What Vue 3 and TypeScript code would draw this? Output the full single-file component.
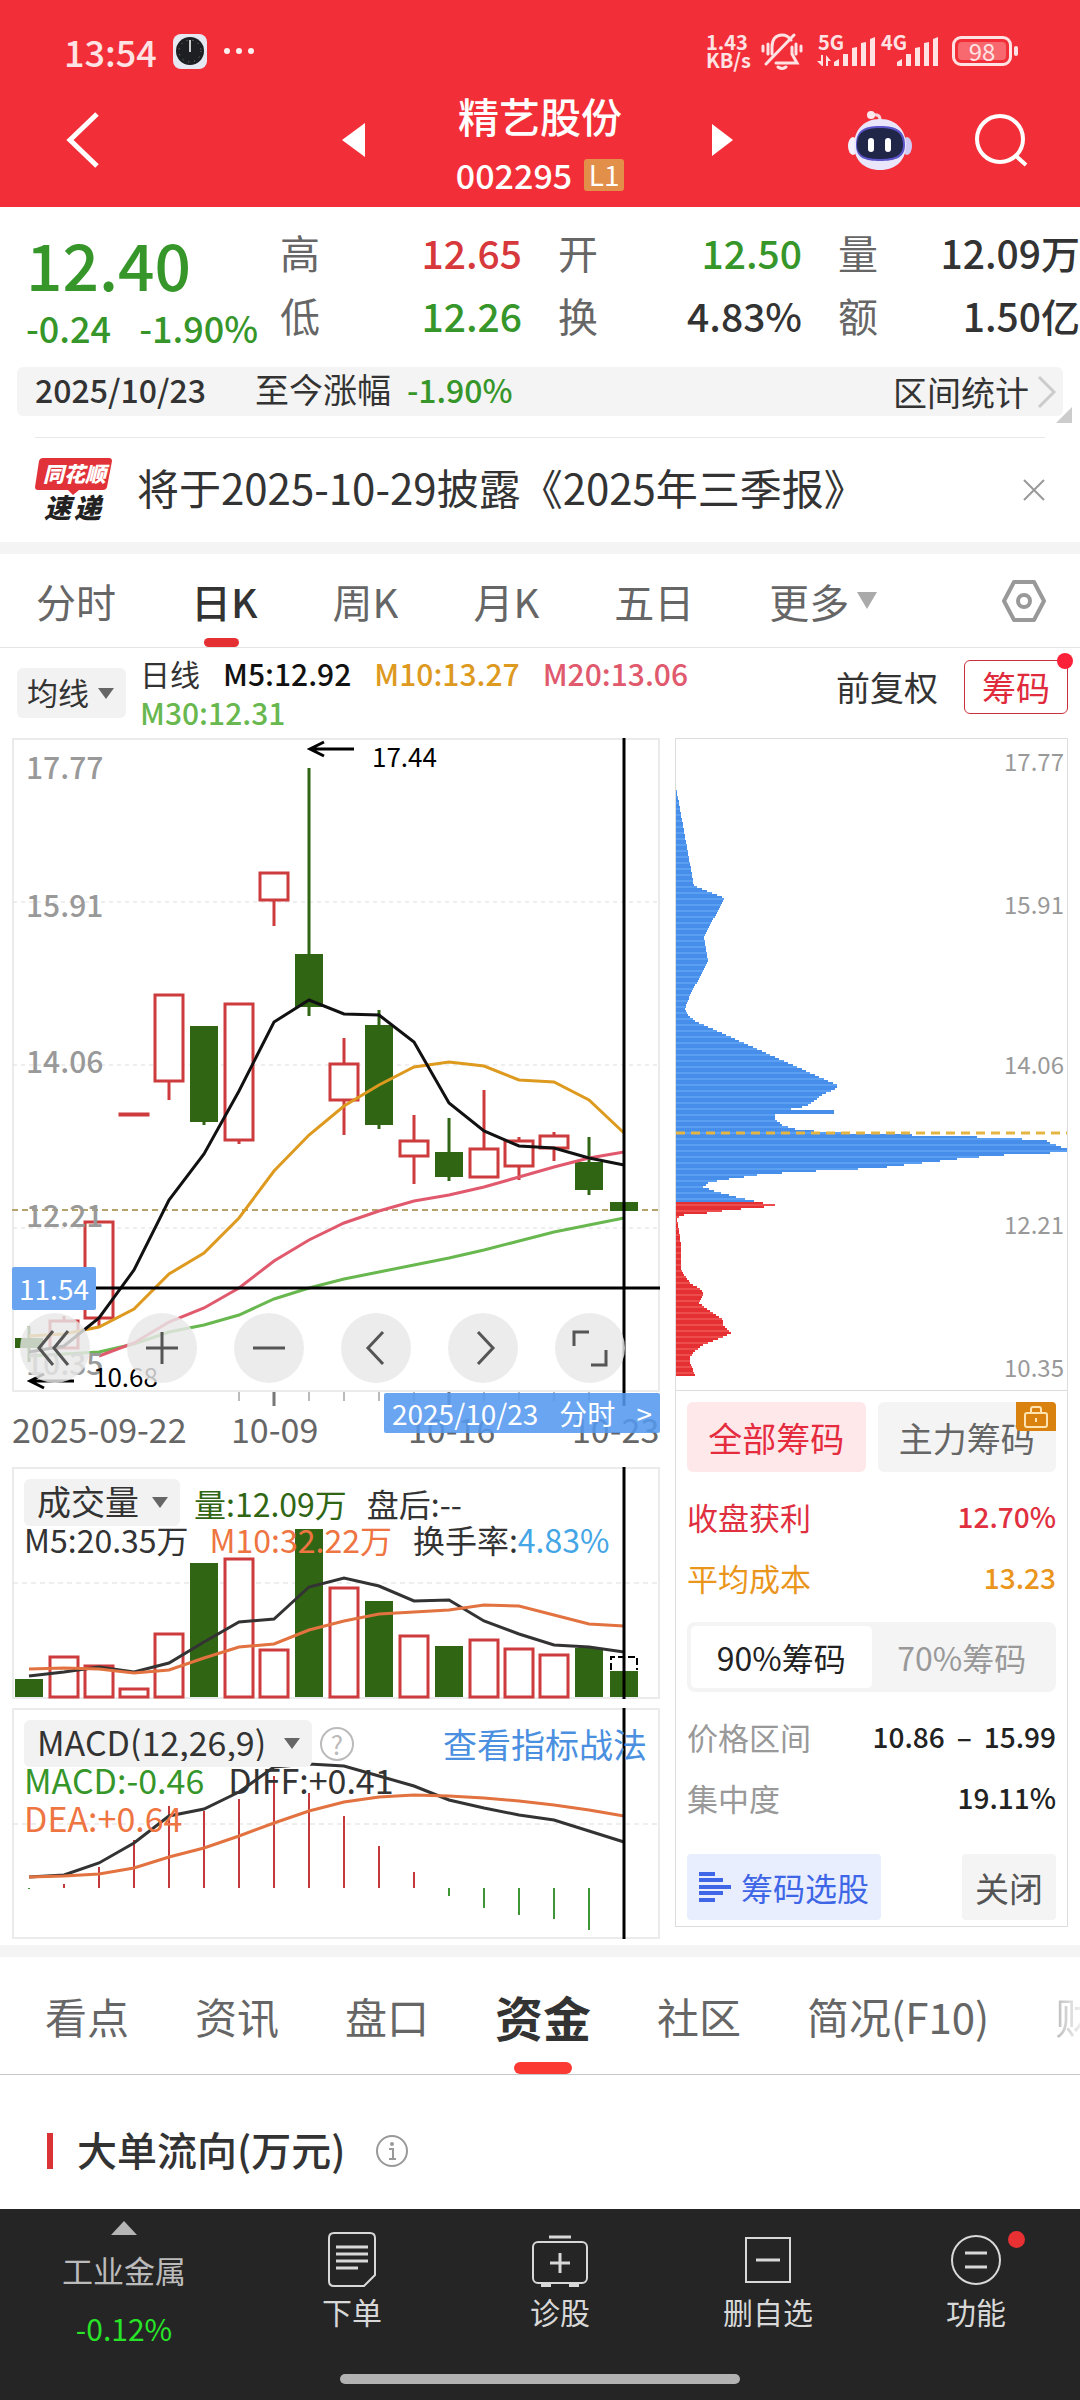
<script setup lang="ts">
import { ref } from 'vue'

type Tone = 'up' | 'down'

interface Candle {
  tone: Tone
  high: number
  top: number
  bottom: number
  low: number
}

interface Figure {
  label: string
  value: string
  tone: string
}

const STEP = 35
const FIRST = 17
const cx = (i: number): number => FIRST + i * STEP

const line = (values: number[], from = 0): string =>
  values.map((y, i) => `${cx(i + from)},${y}`).join(' ')

const figures: Figure[] = [
  { label: '高', value: '12.65', tone: 'up' },
  { label: '开', value: '12.50', tone: 'down' },
  { label: '量', value: '12.09万', tone: 'plain' },
  { label: '低', value: '12.26', tone: 'down' },
  { label: '换', value: '4.83%', tone: 'plain' },
  { label: '额', value: '1.50亿', tone: 'plain' },
]

const periods = ['分时', '日K', '周K', '月K', '五日']
const period = ref('日K')

const averages = [
  { text: 'M5:12.92', tone: 'ma5' },
  { text: 'M10:13.27', tone: 'ma10' },
  { text: 'M20:13.06', tone: 'ma20' },
  { text: 'M30:12.31', tone: 'ma30' },
]

const candles: Candle[] = [
  { tone: 'down', high: 588, top: 600, bottom: 610, low: 624 },
  { tone: 'up', high: 578, top: 583, bottom: 610, low: 610 },
  { tone: 'up', high: 484, top: 484, bottom: 580, low: 589 },
  { tone: 'up', high: 376, top: 376, bottom: 376, low: 376 },
  { tone: 'up', high: 257, top: 257, bottom: 343, low: 362 },
  { tone: 'down', high: 288, top: 288, bottom: 384, low: 387 },
  { tone: 'up', high: 266, top: 266, bottom: 402, low: 406 },
  { tone: 'up', high: 135, top: 135, bottom: 162, low: 188 },
  { tone: 'down', high: 30, top: 216, bottom: 269, low: 278 },
  { tone: 'up', high: 300, top: 326, bottom: 362, low: 397 },
  { tone: 'down', high: 272, top: 287, bottom: 387, low: 391 },
  { tone: 'up', high: 377, top: 403, bottom: 418, low: 446 },
  { tone: 'down', high: 380, top: 414, bottom: 439, low: 443 },
  { tone: 'up', high: 352, top: 411, bottom: 439, low: 439 },
  { tone: 'up', high: 399, top: 403, bottom: 428, low: 442 },
  { tone: 'up', high: 394, top: 398, bottom: 410, low: 423 },
  { tone: 'down', high: 399, top: 424, bottom: 452, low: 457 },
  { tone: 'down', high: 464, top: 464, bottom: 473, low: 473 },
]

const ma5 = [614, 608, 580, 532, 462, 416, 353, 284, 262, 276, 277, 304, 365, 393, 408, 410, 420, 427]
const ma10 = [598, 596, 589, 571, 536, 515, 480, 433, 397, 368, 347, 329, 324, 328, 342, 344, 362, 395]
const ma20 = [618, 605, 584, 570, 550, 523, 502, 485, 473, 463, 457, 449, 439, 429, 420, 414]
const ma30 = [618, 616, 614, 606, 594, 587, 577, 561, 550, 541, 534, 527, 520, 512, 503, 494, 487, 480]

const scale = [
  { text: '17.77', y: 41, side: 32 },
  { text: '15.91', y: 179, side: 175 },
  { text: '14.06', y: 335, side: 335 },
  { text: '12.21', y: 489, side: 495 },
  { text: '10.35', y: 637, side: 638 },
]

const ticks = [6, 7, 8, 9, 10, 11, 12, 13, 14, 15, 16, 17]

const volumeTops = [212, 190, 199, 222, 167, 96, 92, 183, 62, 121, 134, 169, 179, 173, 182, 188, 181, 204]
const volumeM5 = [209, 205, 200, 205, 196, 175, 155, 152, 120, 111, 119, 134, 133, 154, 167, 178, 180, 185]
const volumeM10 = [202, 201, 202, 206, 203, 191, 180, 177, 163, 154, 147, 145, 143, 138, 139, 148, 157, 159]

const macdEnds = [181, 176, 159, 132, 98, 103, 91, 68, 85, 108, 138, 164, 188, 200, 207, 211, 222, 230]
const diff = [169, 167, 155, 135, 108, 101, 84, 59, 56, 58, 68, 78, 92, 100, 107, 112, 123, 134]
const dea = [169, 168, 166, 160, 149, 140, 128, 115, 103, 94, 89, 87, 88, 90, 93, 97, 102, 108]

/* Outline of the chip distribution: [bar length, y] */
const outline: [number, number][] = [
  [0, 47], [18, 146], [49, 158], [28, 196], [32, 222], [14, 255], [9, 269], [11, 274], [19, 281],
  [161, 345], [161, 348], [146, 355], [131, 366], [115, 369], [158, 370], [158, 373], [99, 374], [99, 379], [106, 385], [122, 390],
  [171, 393], [301, 397], [369, 400], [374, 403], [391, 409], [391, 411], [374, 413], [328, 415], [290, 418], [246, 423],
  [202, 428], [161, 430], [119, 432], [81, 435], [61, 438], [45, 440], [32, 443], [27, 447], [41, 452],
  [64, 458], [87, 463], [99, 464], [99, 466], [53, 470], [31, 473], [8, 475], [1, 478], [5, 505], [5, 530],
  [14, 543], [26, 550], [27, 556], [23, 563], [32, 570], [47, 580], [47, 585], [55, 593], [47, 597],
  [27, 605], [19, 611], [14, 617], [14, 622], [19, 636],
]

const lengthAt = (y: number): number => {
  const next = outline.findIndex((p) => p[1] >= y)
  if (next <= 0) return outline[0][0]
  const [x1, y1] = outline[next - 1]
  const [x2, y2] = outline[next]
  return Math.round(x1 + ((x2 - x1) * (y - y1)) / (y2 - y1))
}

const chipRows = Array.from({ length: 295 }, (_, i) => {
  const y = 47 + i * 2
  return { y, width: lengthAt(y), tone: y < 463 ? 'loss' : 'gain', light: i % 3 === 2 }
})

const chipRange = ref('90%筹码')
const chipRanges = ['90%筹码', '70%筹码']

const sections = ['看点', '资讯', '盘口', '资金', '社区', '简况(F10)', '财务']
const section = ref('资金')
</script>

<template>
  <div class="page">
    <header class="top">
      <div class="status">
        <div class="status-side">
          <span class="clock-text">13:54</span>
          <svg class="clock-icon" width="34" height="35" viewBox="0 0 34 35" aria-hidden="true">
            <rect width="34" height="35" rx="8" fill="#e6e9f2" />
            <circle cx="17" cy="17" r="14" fill="#1d1f22" />
            <circle cx="17" cy="17" r="11" fill="none" stroke="#888" stroke-width="1" stroke-dasharray="1 5" />
            <path d="M17 18V6" stroke="#ccc" stroke-width="2" />
          </svg>
          <svg width="32" height="8" viewBox="0 0 32 8" fill="#fff0f0" aria-hidden="true">
            <circle cx="4" cy="4" r="3" /><circle cx="16" cy="4" r="3" /><circle cx="28" cy="4" r="3" />
          </svg>
        </div>
        <div class="status-side">
          <span class="speed">1.43<br />KB/s</span>
          <svg class="bell" width="42" height="38" viewBox="0 0 42 38" fill="none" stroke="#ffe2e3" stroke-width="3" stroke-linecap="round" aria-hidden="true">
            <path d="M11 22V15C11 7 15 3 21 3C25 3 28 5 30 8M31 15V22L36 31H15" />
            <path d="M33 3L5 32" />
            <path d="M17 35Q21 38 25 35" />
            <path d="M2 14V19M7 12V22M35 12V22M40 14V19" />
          </svg>
          <span class="signal">
            <small>5G</small>
            <svg width="59" height="32" viewBox="0 0 59 32" fill="#ffe2e3" aria-hidden="true">
              <path d="M4 20H6V31H5L0 26H4ZM9 31H11V26H14L9 20Z" />
              <path d="M17 31V27L22 24V31ZM26 31V19H31V31ZM35 31V13L40 12V31ZM44 31V8L49 7V31ZM53 31V4L58 2V31Z" />
            </svg>
          </span>
          <span class="signal">
            <small>4G</small>
            <svg width="59" height="32" viewBox="0 0 59 32" fill="#ffe2e3" aria-hidden="true">
              <path d="M17 31V27L22 24V31ZM26 31V19H31V31ZM35 31V13L40 12V31ZM44 31V8L49 7V31ZM53 31V4L58 2V31Z" />
            </svg>
          </span>
          <span class="battery"><span>98</span></span>
        </div>
      </div>
      <div class="nav">
        <button class="icon-btn back" aria-label="返回">
          <svg width="36" height="60" viewBox="0 0 36 60" fill="none" stroke="#fff" stroke-width="5"><path d="M33 4L6 30L33 56" /></svg>
        </button>
        <button class="icon-btn" aria-label="上一只">
          <svg width="23" height="34" viewBox="0 0 23 34" fill="#fff"><path d="M23 0V34L0 17Z" /></svg>
        </button>
        <div class="title">
          <h1>精艺股份</h1>
          <p>002295<span class="level">L1</span></p>
        </div>
        <button class="icon-btn next" aria-label="下一只">
          <svg width="21" height="32" viewBox="0 0 21 32" fill="#fff"><path d="M0 0V32L21 16Z" /></svg>
        </button>
        <button class="icon-btn robot" aria-label="智能助手">
          <svg width="64" height="62" viewBox="0 0 64 62">
            <path d="M24 6Q33 4 32 13" fill="none" stroke="#f6d5df" stroke-width="3" />
            <circle cx="23" cy="6" r="4" fill="#fbe9ef" />
            <ellipse cx="5" cy="37" rx="5" ry="9" fill="#f3f0fb" />
            <ellipse cx="59" cy="37" rx="5" ry="9" fill="#cfc9f3" />
            <path d="M32 10C50 10 58 23 58 36C58 51 48 61 32 61C16 61 6 51 6 36C6 23 14 10 32 10Z" fill="#e9e6fb" />
            <path d="M32 17C49 17 57 22 57 36C57 49 47 52 32 52C17 52 8 49 8 36C8 22 15 17 32 17Z" fill="#5b55c9" />
            <path d="M32 19C48 19 55 24 55 36C55 47 46 50 32 50C18 50 9 47 9 36C9 24 16 19 32 19Z" fill="#1f2647" />
            <rect x="20" y="29" width="6" height="14" rx="3" fill="#fff" />
            <rect x="37" y="29" width="6" height="14" rx="3" fill="#fff" />
          </svg>
        </button>
        <button class="icon-btn search" aria-label="搜索">
          <svg width="54" height="54" viewBox="0 0 54 54" fill="none" stroke="#fff" stroke-width="4">
            <circle cx="26" cy="26" r="23" /><path d="M42 43L52 52" />
          </svg>
        </button>
      </div>
    </header>

    <section class="quote">
      <div class="price">
        <strong>12.40</strong>
        <p><span>-0.24</span><span>-1.90%</span></p>
      </div>
      <dl class="figures">
        <div v-for="f in figures" :key="f.label">
          <dt>{{ f.label }}</dt>
          <dd :class="f.tone">{{ f.value }}</dd>
        </div>
      </dl>
    </section>

    <div class="strip">
      <span class="strip-date">2025/10/23</span>
      <span class="strip-label">至今涨幅</span>
      <span class="strip-pct">-1.90%</span>
      <a href="#range" class="strip-link">
        区间统计
        <svg width="20" height="34" viewBox="0 0 20 34" fill="none" stroke="#ccc" stroke-width="3"><path d="M2 2L17 17L2 32" /></svg>
      </a>
      <i class="corner"></i>
    </div>

    <section class="news">
      <svg class="logo" width="78" height="66" viewBox="0 0 78 66">
        <path d="M8 1H74Q77 1 77 4L72 30Q71 33 68 33H44L38 38L33 33H3Q0 33 0 30L4 4Q5 1 8 1Z" fill="#e03238" />
        <text x="8" y="25" class="logo-a">同花顺</text>
        <text x="9" y="61" class="logo-b">速</text>
        <text x="39" y="61" class="logo-b">递</text>
      </svg>
      <a href="#report">将于2025-10-29披露《2025年三季报》</a>
      <button class="icon-btn" aria-label="关闭提示">
        <svg width="22" height="22" viewBox="0 0 22 22" stroke="#999" stroke-width="2"><path d="M1 1L21 21M21 1L1 21" /></svg>
      </button>
    </section>

    <nav class="periods">
      <button v-for="p in periods" :key="p" :class="{ active: p === period }" @click="period = p">{{ p }}</button>
      <button class="more">更多<i class="tri"></i></button>
      <button class="icon-btn setting" aria-label="设置">
        <svg width="44" height="44" viewBox="0 0 44 44" fill="none" stroke="#999" stroke-width="4" stroke-linejoin="round">
          <path d="M12 3H32L42 22L32 41H12L2 22Z" /><circle cx="22" cy="22" r="6" />
        </svg>
      </button>
    </nav>

    <section class="averages">
      <label class="picker picker-ma">
        <select aria-label="主图指标"><option>均线</option></select><i class="tri"></i>
      </label>
      <p class="ma-list">
        <span>日线</span>
        <span v-for="m in averages" :key="m.text" :class="m.tone">{{ m.text }}</span>
      </p>
      <div class="ma-actions">
        <button class="plain-btn">前复权</button>
        <button class="chip-btn">筹码<i class="dot"></i></button>
      </div>
    </section>

    <section class="charts">
      <div class="left">
        <div class="panel">
          <svg viewBox="0 0 648 729">
            <rect x="1" y="1" width="646" height="652" fill="none" stroke="#ebebeb" stroke-width="2" />
            <g stroke="#ddd" stroke-width="1" stroke-dasharray="4 4">
              <path d="M1 164H647M1 327H647M1 490H647" />
            </g>
            <path d="M0 472H648" stroke="#b5a26c" stroke-width="2" stroke-dasharray="6 4" />
            <g v-for="(c, i) in candles" :key="i" :class="['candle', c.tone]">
              <path :d="`M${cx(i)} ${c.high}V${c.top}M${cx(i)} ${c.bottom}V${c.low}`" />
              <rect :x="cx(i) - 14" :y="c.top" width="28" :height="Math.max(c.bottom - c.top, 1)" />
            </g>
            <g class="curves">
              <polyline :points="line(ma30)" stroke="#69b84f" />
              <polyline :points="line(ma20, 2)" stroke="#e0596d" />
              <polyline :points="line(ma10)" stroke="#dd9a1f" />
              <polyline :points="line(ma5)" stroke="#111" />
            </g>
            <g class="axis">
              <text v-for="s in scale" :key="s.text" x="14" :y="s.y">{{ s.text }}</text>
            </g>
            <g fill="none" stroke="#000" stroke-width="3">
              <path d="M342 11H298M312 4L298 11L312 18" />
              <path d="M62 643H18M32 636L18 643L32 650" />
            </g>
            <text class="mark" x="360" y="29">17.44</text>
            <text class="mark" x="81" y="649">10.68</text>
            <g stroke="#bbb" stroke-width="2">
              <path v-for="t in ticks" :key="t" :d="`M${cx(t)} 654V663`" />
            </g>
            <path d="M262 654V668M437 654V668" stroke="#777" stroke-width="3" />
            <g class="dates">
              <text x="0" y="705">2025-09-22</text>
              <text x="219" y="705">10-09</text>
              <text x="396" y="705">10-16</text>
              <text x="560" y="705">10-23</text>
            </g>
            <path d="M0 550H648M612 0V668" stroke="#000" stroke-width="3" />
          </svg>
          <span class="price-tag">11.54</span>
          <div class="tools">
            <button aria-label="最左"><svg viewBox="0 0 40 40"><path d="M18 3L4 20L18 37M33 3L19 20L33 37" /></svg></button>
            <button aria-label="放大"><svg viewBox="0 0 40 40"><path d="M20 4V36M4 20H36" /></svg></button>
            <button aria-label="缩小"><svg viewBox="0 0 40 40"><path d="M4 20H36" /></svg></button>
            <button aria-label="左移"><svg viewBox="0 0 40 40"><path d="M27 4L12 20L27 36" /></svg></button>
            <button aria-label="右移"><svg viewBox="0 0 40 40"><path d="M15 4L30 20L15 36" /></svg></button>
            <button aria-label="全屏"><svg viewBox="0 0 40 40"><path d="M4 18V4H19M36 22V37H21" /></svg></button>
          </div>
          <button class="date-tag"><span>2025/10/23</span><span>分时</span><span>&gt;</span></button>
        </div>

        <div class="panel">
          <svg viewBox="0 0 648 232">
            <rect x="1" y="1" width="646" height="230" fill="none" stroke="#ebebeb" stroke-width="2" />
            <path d="M1 116H647" stroke="#ddd" stroke-dasharray="5 4" />
            <g v-for="(top, i) in volumeTops" :key="i" :class="['candle', candles[i].tone]">
              <rect :x="cx(i) - 14" :y="top" width="28" :height="230 - top" />
            </g>
            <path d="M599 203V190H625V203" fill="none" stroke="#000" stroke-width="2" stroke-dasharray="7 3" />
            <g class="curves">
              <polyline :points="line(volumeM5)" stroke="#333" />
              <polyline :points="line(volumeM10)" stroke="#e2723f" />
            </g>
            <path d="M612 0V232" stroke="#000" stroke-width="3" />
          </svg>
          <div class="legend legend-vol">
            <p>
              <label class="picker picker-vol">
                <select aria-label="副图指标"><option>成交量</option></select><i class="tri"></i>
              </label>
              <span class="vol">量:12.09万</span><span>盘后:--</span>
            </p>
            <p class="spread"><span>M5:20.35万</span><span class="orange">M10:32.22万</span><span>换手率:<b>4.83%</b></span></p>
          </div>
        </div>

        <div class="panel macd">
          <svg viewBox="0 0 648 231">
            <rect x="1" y="1" width="646" height="229" fill="none" stroke="#ebebeb" stroke-width="2" />
            <path d="M1 116H647" stroke="#ddd" stroke-dasharray="5 4" />
            <path
              v-for="(end, i) in macdEnds"
              :key="i"
              :d="`M${cx(i)} 180V${end}`"
              :stroke="end < 180 ? '#c4393c' : '#3f9636'"
              stroke-width="2"
            />
            <g class="curves">
              <polyline :points="line(diff)" stroke="#333" />
              <polyline :points="line(dea)" stroke="#e2723f" />
            </g>
            <path d="M612 0V231" stroke="#000" stroke-width="3" />
          </svg>
          <div class="legend legend-macd">
            <p>
              <label class="picker picker-macd">
                <select aria-label="技术指标"><option>MACD(12,26,9)</option></select><i class="tri"></i>
              </label>
              <button class="help" aria-label="帮助">?</button>
              <a href="#strategy">查看指标战法</a>
            </p>
            <p class="spread"><span class="green">MACD:-0.46</span><span>DIFF:+0.41</span></p>
            <p><span class="orange">DEA:+0.64</span></p>
          </div>
        </div>
      </div>

      <div class="right">
        <svg viewBox="0 0 391 651" class="chips">
          <g shape-rendering="crispEdges">
            <rect
              v-for="r in chipRows"
              :key="r.y"
              x="0"
              :y="r.y"
              :width="r.width"
              height="2"
              :class="[r.tone, { light: r.light }]"
            />
          </g>
          <path d="M0 394H391" stroke="#e5b544" stroke-width="3" stroke-dasharray="9 6" />
          <g class="side-axis">
            <text v-for="s in scale" :key="s.text" x="388" :y="s.side">{{ s.text }}</text>
          </g>
        </svg>
        <div class="chip-info">
          <div class="chip-tabs">
            <button class="active">全部筹码</button>
            <button>
              主力筹码
              <span class="lock">
                <svg width="24" height="22" viewBox="0 0 24 22" fill="none" stroke="#ffe3b0" stroke-width="2">
                  <rect x="1" y="7" width="22" height="14" rx="2" /><path d="M7 7V3Q7 1 9 1H15Q17 1 17 3V7M12 12V16" />
                </svg>
              </span>
            </button>
          </div>
          <dl>
            <div class="red"><dt>收盘获利</dt><dd>12.70%</dd></div>
            <div class="amber"><dt>平均成本</dt><dd>13.23</dd></div>
          </dl>
          <div class="toggle">
            <button v-for="r in chipRanges" :key="r" :class="{ active: r === chipRange }" @click="chipRange = r">{{ r }}</button>
          </div>
          <dl class="muted">
            <div><dt>价格区间</dt><dd class="range"><span>10.86</span><span>–</span><span>15.99</span></dd></div>
            <div><dt>集中度</dt><dd>19.11%</dd></div>
          </dl>
          <div class="chip-actions">
            <button class="pick">
              <svg width="32" height="32" viewBox="0 0 32 32" fill="#3f66e6">
                <path d="M0 1H16V5H0ZM0 7H24V11H0ZM0 14H32V18H0ZM0 20H24V24H0ZM0 27H16V31H0Z" />
              </svg>
              筹码选股
            </button>
            <button class="close">关闭</button>
          </div>
        </div>
      </div>
    </section>

    <nav class="sections">
      <button v-for="s in sections" :key="s" :class="{ active: s === section }" @click="section = s">{{ s }}</button>
    </nav>

    <section class="flow">
      <h2>大单流向(万元)</h2>
      <button class="icon-btn" aria-label="说明">
        <svg width="34" height="34" viewBox="0 0 34 34" fill="none" stroke="#999" stroke-width="2">
          <circle cx="17" cy="17" r="15" />
          <circle cx="17" cy="10" r="2" fill="#999" stroke="none" />
          <path d="M14 15H18V25M14 25H21" />
        </svg>
      </button>
    </section>

    <footer class="bottom">
      <div class="bottom-row">
        <button class="industry">
          <i></i><span>工业金属</span><em>-0.12%</em>
        </button>
        <button>
          <svg width="48" height="56" viewBox="0 0 48 56">
            <path d="M6 1H42Q47 1 47 6V43L36 54H6Q1 54 1 49V6Q1 1 6 1Z" />
            <path d="M8 15H40M8 22H40M8 29H40M8 36H30" stroke-width="3" />
          </svg>
          下单
        </button>
        <button>
          <svg width="56" height="56" viewBox="0 0 56 56">
            <rect x="1" y="10" width="54" height="41" rx="5" />
            <path d="M17 5H39M28 21V41M18 31H38" stroke-width="3" /><path d="M9 53H19M37 53H47" stroke-width="4" />
          </svg>
          诊股
        </button>
        <button>
          <svg width="46" height="56" viewBox="0 0 46 56"><rect x="1" y="6" width="44" height="44" /><path d="M11 28H35" stroke-width="3" /></svg>
          删自选
        </button>
        <button>
          <svg width="52" height="56" viewBox="0 0 52 56"><circle cx="26" cy="28" r="24" /><path d="M15 21H37M15 35H37" stroke-width="3" /></svg>
          功能
          <b></b>
        </button>
      </div>
      <div class="home"></div>
    </footer>
  </div>
</template>

<style>
body {
  margin: 0;
  background: #fff;
}
</style>

<style scoped>
.page {
  display: flex;
  flex-direction: column;
  min-height: 100vh;
  overflow-x: hidden;
  background: #fff;
  color: #333;
  font-family: "Noto Sans CJK SC", sans-serif;
}
.page * {
  box-sizing: border-box;
}
h1,
h2,
p,
dl,
dd {
  margin: 0;
  font-weight: 400;
}
button {
  margin: 0;
  padding: 0;
  border: 0;
  background: none;
  color: inherit;
  font: inherit;
  white-space: nowrap;
}
a {
  color: inherit;
  text-decoration: none;
}
svg {
  display: block;
  flex: none;
}
.icon-btn {
  display: flex;
}
.up {
  color: #d7383b;
}
.down {
  color: #36962a;
}

/* header */
.top {
  height: 207px;
  background: #f22f38;
  color: #fff;
}
.status {
  display: flex;
  justify-content: space-between;
  align-items: center;
  height: 72px;
  padding: 30px 68px 0 64px;
  color: #ffe2e3;
}
.status-side {
  display: flex;
  align-items: center;
  height: 42px;
}
.clock-text {
  font-size: 36px;
  line-height: 40px;
  font-weight: 500;
}
.clock-icon {
  margin: 0 16px;
}
.speed {
  font-size: 20px;
  line-height: 18px;
  font-weight: 700;
}
.bell {
  margin: 0 14px 0 10px;
}
.signal {
  position: relative;
  margin-right: 4px;
}
.signal small {
  position: absolute;
  top: 0;
  left: 1px;
  font-size: 20px;
  line-height: 14px;
  font-weight: 700;
}
.battery {
  position: relative;
  width: 60px;
  height: 30px;
  margin-left: 9px;
  padding: 3px;
  border: 3px solid #ffe2e3;
  border-radius: 9px;
}
.battery::after {
  content: "";
  position: absolute;
  top: 7px;
  right: -9px;
  width: 4px;
  height: 10px;
  border-radius: 2px;
  background: #ffe2e3;
}
.battery span {
  display: block;
  border-radius: 4px;
  background: #f7686f;
  font-size: 24px;
  line-height: 18px;
  text-align: center;
}
.nav {
  display: grid;
  grid-template-columns: 342px 56px 1fr 56px 98px 126px 106px;
  align-items: center;
  height: 135px;
}
.back {
  padding-left: 64px;
}
.next {
  justify-content: center;
}
.robot {
  grid-column: 6;
}
.title {
  padding: 12px 12px 0 0;
  text-align: center;
}
.title h1 {
  font-size: 41px;
  line-height: 58px;
  font-weight: 500;
}
.title p {
  display: flex;
  justify-content: center;
  align-items: center;
  gap: 12px;
  height: 62px;
  font-size: 34px;
  line-height: 58px;
  font-weight: 500;
}
.level {
  width: 40px;
  height: 32px;
  border-radius: 3px;
  background: #e28f4a;
  font-size: 28px;
  line-height: 30px;
  font-weight: 400;
}

/* quote */
.quote {
  display: flex;
  height: 160px;
  padding-top: 14px;
}
.price {
  flex: none;
  width: 280px;
  padding-left: 26px;
  color: #36962a;
}
.price strong {
  display: block;
  font-size: 64px;
  line-height: 84px;
  font-weight: 500;
}
.price p {
  display: flex;
  gap: 28px;
  font-size: 36px;
  line-height: 44px;
  font-weight: 500;
}
.figures {
  display: grid;
  flex: 1;
  grid-template-columns: 242px 244px 1fr;
  column-gap: 36px;
  grid-auto-rows: 63px;
}
.figures div {
  display: flex;
  justify-content: space-between;
  font-size: 40px;
  line-height: 63px;
}
.figures dt {
  color: #666;
}
.figures dd {
  font-size: 39px;
  font-weight: 500;
}

/* range strip */
.strip {
  position: relative;
  display: flex;
  align-items: center;
  height: 49px;
  margin: 0 17px;
  padding: 0 6px 0 18px;
  border-radius: 6px;
  background: #f4f4f4;
  font-size: 34px;
  line-height: 44px;
}
.strip > span,
.strip-link {
  height: 49px;
}
.strip-date,
.strip-pct {
  font-size: 32px;
  font-weight: 500;
}
.strip-label {
  margin: 0 16px 0 49px;
}
.strip-pct {
  flex: 1;
  color: #36962a;
}
.strip-link {
  display: flex;
  align-items: center;
  gap: 8px;
}
.corner {
  position: absolute;
  right: -9px;
  bottom: -7px;
  border: 8px solid transparent;
  border-right-color: #ccc;
  border-bottom-color: #ccc;
}

/* news */
.news {
  display: flex;
  align-items: center;
  height: 105px;
  margin: 21px 35px 0;
  border-top: 1px solid #e8e8e8;
}
.news a {
  flex: 1;
  margin-left: 24px;
  padding-bottom: 8px;
  font-size: 42px;
}
.logo {
  overflow: visible;
}
.logo-a {
  fill: #fff;
  font-size: 21px;
  font-weight: 900;
  font-style: italic;
}
.logo-b {
  fill: #222;
  font-size: 27px;
  font-weight: 900;
  font-style: italic;
}

/* period tabs */
.periods {
  display: flex;
  align-items: center;
  height: 106px;
  padding: 0 34px 0 36px;
  border-top: 12px solid #f4f4f4;
  border-bottom: 1px solid #e4e4e4;
  color: #666;
  font-size: 40px;
}
.periods button {
  height: 93px;
  margin-right: 75px;
  line-height: 90px;
}
.periods .active {
  position: relative;
  color: #333;
  font-weight: 500;
}
.periods .active::after {
  content: "";
  position: absolute;
  left: 50%;
  bottom: 0;
  width: 35px;
  height: 9px;
  margin-left: -20px;
  border-radius: 5px;
  background: #e53033;
}
.periods .more {
  display: flex;
  align-items: center;
  gap: 8px;
}
.periods .setting {
  align-items: center;
  margin: 0 0 0 auto;
}
.tri {
  border: 8px solid transparent;
  border-top: 11px solid #666;
  border-bottom: 0;
}
.more .tri {
  border-width: 17px 10px 0;
  border-top-color: #aaa;
}

/* averages */
.averages {
  display: flex;
  align-items: center;
  height: 90px;
  padding: 0 12px 0 17px;
}
.picker {
  position: relative;
  display: flex;
  align-items: center;
  border-radius: 6px;
  background: #f2f2f2;
}
.picker select {
  width: 100%;
  height: 100%;
  padding: 0 0 3px 10px;
  border: 0;
  appearance: none;
  background: none;
  color: #333;
  font: inherit;
}
.picker .tri {
  position: absolute;
  right: 12px;
  pointer-events: none;
}
.picker-ma {
  width: 109px;
  height: 50px;
  font-size: 31px;
}
.ma-list {
  display: flex;
  flex: 1;
  flex-wrap: wrap;
  column-gap: 23px;
  margin-left: 14px;
  font-size: 30px;
  line-height: 39px;
  font-weight: 500;
}
.ma-list span:first-child {
  font-weight: 400;
}
.ma5 {
  color: #111;
}
.ma10 {
  color: #dd9a1f;
}
.ma20 {
  color: #e0596d;
}
.ma30 {
  color: #69b84f;
}
.ma-actions {
  display: flex;
  align-items: center;
  gap: 26px;
  padding-bottom: 13px;
}
.plain-btn {
  font-size: 34px;
  line-height: 54px;
}
.chip-btn {
  position: relative;
  width: 104px;
  height: 54px;
  border: 1px solid #c9303f;
  border-radius: 6px;
  color: #e02b3c;
  font-size: 34px;
  line-height: 50px;
}
.dot {
  position: absolute;
  top: -8px;
  right: -6px;
  width: 16px;
  height: 16px;
  border-radius: 50%;
  background: #fb2138;
}

/* charts */
.charts {
  display: grid;
  grid-template-columns: 648fr 393fr;
  column-gap: 15px;
  padding: 0 12px 6px;
}
.charts svg[viewBox^="0 0 648"] {
  width: 100%;
}
.panel {
  position: relative;
}
.macd {
  margin-top: 9px;
}
.candle path {
  stroke-width: 3;
}
.candle.up path,
.candle.up rect {
  fill: #fff;
  stroke: #cd3b3c;
  stroke-width: 3;
}
.candle.down path {
  stroke: #306613;
}
.candle.down rect {
  fill: #306613;
}
.curves {
  fill: none;
  stroke-width: 3;
}
.axis {
  fill: #999;
  font-size: 30px;
  font-weight: 500;
}
.side-axis {
  fill: #999;
  font-size: 24px;
  text-anchor: end;
}
.mark {
  fill: #000;
  font-size: 26px;
}
.dates {
  fill: #666;
  font-size: 34px;
}
.price-tag {
  position: absolute;
  top: 529px;
  left: 0;
  width: 84px;
  height: 43px;
  border-radius: 2px;
  background: #68a4f0;
  color: #fff;
  font-size: 28px;
  line-height: 43px;
  text-align: center;
}
.tools {
  position: absolute;
  top: 575px;
  left: 8px;
  display: flex;
  gap: 37px;
}
.tools button {
  display: flex;
  align-items: center;
  justify-content: center;
  width: 70px;
  height: 70px;
  border-radius: 50%;
  background: rgba(232, 232, 232, 0.82);
}
.tools svg {
  width: 40px;
  height: 40px;
  fill: none;
  stroke: #555;
  stroke-width: 3;
}
.date-tag {
  position: absolute;
  top: 655px;
  right: 0;
  display: flex;
  justify-content: space-between;
  width: 276px;
  height: 40px;
  padding: 0 8px;
  border-radius: 2px;
  background: rgba(84, 153, 238, 0.88);
  color: #fff;
  font-size: 28px;
  line-height: 40px;
}
.legend {
  position: absolute;
  top: 12px;
  left: 12px;
  right: 1px;
  font-size: 32px;
  line-height: 38px;
}
.legend p {
  display: flex;
  align-items: center;
}
.legend-vol .vol {
  margin: 0 20px 0 14px;
  color: #306613;
}
.picker-vol {
  width: 156px;
  height: 47px;
}
.picker-vol select,
.picker-macd select {
  padding-left: 13px;
  font-size: 34px;
}
.legend-vol .spread {
  gap: 21px;
}
.legend b {
  color: #45a6e6;
  font-weight: 400;
}
.legend .spread {
  margin-top: -6px;
}
.orange {
  color: #ee7441;
}
.green {
  color: #36962a;
}
.legend-macd {
  font-size: 34px;
}
.legend-macd .spread {
  gap: 24px;
}
.picker-macd {
  width: 288px;
  height: 47px;
}
.help {
  width: 34px;
  height: 34px;
  margin-left: 8px;
  border: 2px solid #bbb;
  border-radius: 50%;
  color: #bbb;
  font-size: 26px;
  line-height: 28px;
}
.legend a {
  margin-left: auto;
  margin-right: 12px;
  color: #4a8fe0;
}

/* chip distribution */
.right {
  display: flex;
  flex-direction: column;
  margin-bottom: 12px;
  border: 1px solid #ddd;
}
.chips {
  width: 100%;
}
.loss {
  fill: #468eea;
}
.loss.light {
  fill: #5b9ff3;
}
.gain {
  fill: #e53033;
}
.gain.light {
  fill: #ee4d4d;
}
.chip-info {
  flex: 1;
  display: flex;
  flex-direction: column;
  padding: 11px 11px 6px;
  border-top: 1px solid #ddd;
}
.chip-tabs {
  display: grid;
  grid-template-columns: 1fr 1fr;
  gap: 12px;
  margin-bottom: 14px;
}
.chip-tabs button {
  position: relative;
  height: 70px;
  border-radius: 6px;
  background: #f4f4f4;
  color: #666;
  font-size: 34px;
}
.chip-tabs .active {
  background: #ffe8ea;
  color: #e52b3e;
}
.lock {
  position: absolute;
  top: 0;
  right: 0;
  display: flex;
  align-items: center;
  justify-content: center;
  width: 40px;
  height: 29px;
  border-radius: 0 4px 0 4px;
  background: #d9820f;
}
.chip-info dl div {
  display: flex;
  justify-content: space-between;
  font-size: 31px;
  line-height: 61px;
}
.chip-info dd {
  font-size: 28px;
  font-weight: 500;
}
.red {
  color: #e03040;
}
.amber {
  color: #ea951c;
}
.muted dt {
  color: #999;
}
.muted dd {
  color: #222;
}
.range {
  display: flex;
  gap: 12px;
}
.toggle {
  display: grid;
  grid-template-columns: 1fr 1fr;
  height: 70px;
  margin: 14px 0;
  padding: 4px;
  border-radius: 8px;
  background: #f4f4f4;
}
.toggle button {
  border-radius: 5px;
  color: #999;
  font-size: 32px;
}
.toggle .active {
  background: #fff;
  color: #222;
}
.chip-actions {
  display: flex;
  justify-content: space-between;
  margin-top: auto;
}
.pick {
  display: flex;
  align-items: center;
  gap: 10px;
  height: 66px;
  padding: 0 12px;
  border-radius: 4px;
  background: #e8eefe;
  color: #3f66e6;
  font-size: 32px;
}
.close {
  width: 94px;
  border-radius: 4px;
  background: #f4f4f4;
  color: #555;
  font-size: 34px;
}

/* sections */
.sections {
  display: flex;
  gap: 66px;
  height: 130px;
  padding-left: 45px;
  border-top: 12px solid #f4f4f4;
  border-bottom: 1px solid #c8c8c8;
  color: #666;
  font-size: 42px;
}
.sections button {
  height: 117px;
  line-height: 112px;
}
.sections .active {
  position: relative;
  color: #333;
  font-size: 48px;
  font-weight: 700;
}
.sections .active::after {
  content: "";
  position: absolute;
  bottom: 0;
  left: 50%;
  width: 58px;
  height: 12px;
  margin-left: -29px;
  border-radius: 6px;
  background: #fb3b33;
}
.sections button:last-child {
  background: linear-gradient(90deg, #bbb, #fff 34px);
  background-clip: text;
  color: transparent;
}

.flow {
  flex: 1;
  display: flex;
  align-items: center;
  min-height: 134px;
  padding: 18px 47px 0;
}
.flow::before {
  content: "";
  width: 6px;
  height: 36px;
  margin-right: 24px;
  background: #d93335;
}
.flow h2 {
  margin-right: 30px;
  font-size: 40px;
  line-height: 58px;
  padding-bottom: 4px;
  font-weight: 500;
}

/* bottom bar */
.bottom {
  height: 191px;
  padding-bottom: 16px;
  background: #252525;
  color: #d8d8d8;
  font-size: 30px;
}
.bottom-row {
  display: grid;
  grid-template-columns: 248fr repeat(4, 208fr);
  height: 165px;
}
.bottom-row button {
  position: relative;
  display: flex;
  flex-direction: column;
  align-items: center;
  padding-top: 23px;
  line-height: 46px;
}
.bottom-row svg {
  fill: none;
  stroke: #d8d8d8;
  stroke-width: 2;
}
.bottom-row b {
  position: absolute;
  top: 22px;
  left: 50%;
  width: 17px;
  height: 17px;
  margin-left: 32px;
  border-radius: 50%;
  background: #e93134;
}
.bottom-row .industry {
  padding-top: 12px;
  color: #bbb;
}
.industry i {
  border: 13px solid transparent;
  border-top: 0;
  border-bottom: 14px solid #b5b5b5;
}
.industry span {
  margin-top: 12px;
  font-size: 31px;
}
.industry em {
  margin-top: 12px;
  color: #28e428;
  font-style: normal;
}
.home {
  width: 37%;
  height: 10px;
  margin: 0 auto;
  border-radius: 5px;
  background: #b2b2b2;
}
</style>
